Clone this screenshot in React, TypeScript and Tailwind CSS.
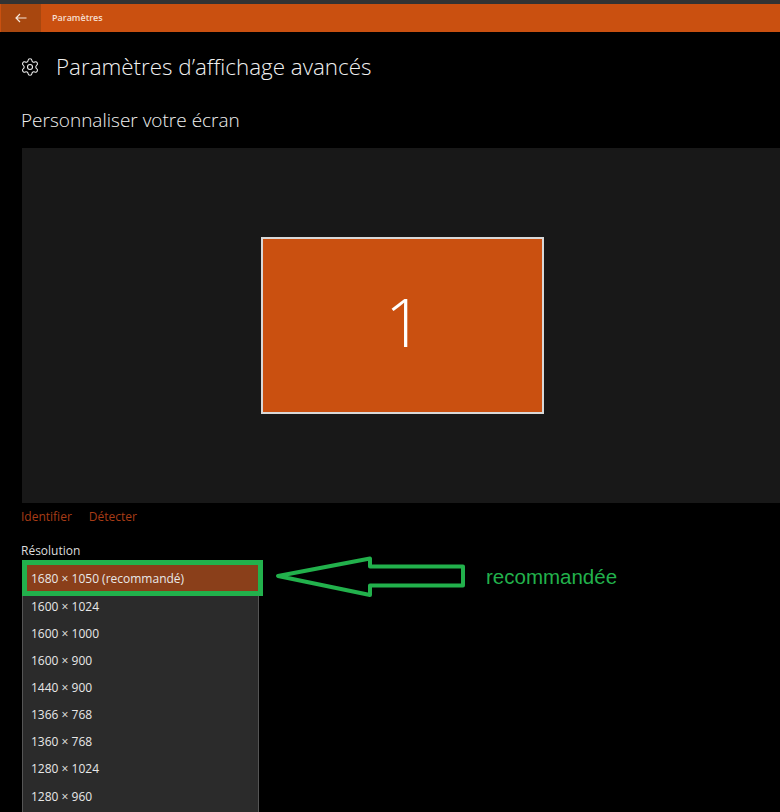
import { Settings } from "lucide-react";

const modes = ["1600 × 1024", "1600 × 1000", "1600 × 900", "1440 × 900", "1366 × 768", "1360 × 768", "1280 × 1024", "1280 × 960"];
const ui = "font-['Open_Sans',sans-serif]";

export default function App() {
  return (
    <div className={`relative h-[812px] w-[780px] overflow-hidden bg-black text-[#f0f0f0] ${ui}`}>
      <div className="h-1 bg-[#333333]" />
      <header className="flex h-7 items-center bg-[#ca5010] pl-px">
        <div className="flex h-full w-10 items-center justify-center bg-[#a8470f]">
          <svg width="12" height="10" viewBox="0 0 12 10" fill="none" stroke="#f5e6da" strokeWidth="1.2">
            <path d="M11.5 5H1M5 1 1 5l4 4" />
          </svg>
        </div>
        <span className="pl-[11px] text-[9px] font-semibold text-[#f6dfd0]">Paramètres</span>
      </header>

      <div className="flex h-[70px] items-center pl-[20px]">
        <Settings size={20} strokeWidth={1.3} className="text-[#eeeeee]" />
        <h1 className="pl-[16px] text-[22.4px] font-light">Paramètres d’affichage avancés</h1>
      </div>

      <h2 className="pl-[21px] text-[19px] font-light leading-[36px]">Personnaliser votre écran</h2>

      <div className="ml-[22px] mt-[10px] flex h-[355px] items-center justify-center bg-[#181818]">
        <div className="mb-[1px] ml-[3px] flex h-[177px] w-[283px] items-center justify-center border-2 border-[#d8d8d8] bg-[#ca5010] text-[66px] font-light text-white">
          <span className="-mt-[8px] ml-[3px]">1</span>
        </div>
      </div>

      <div className="flex gap-[17px] pl-[21px] pt-[5px] text-[12px] leading-[18px] text-[#a83c16]">
        <span>Identifier</span>
        <span>Détecter</span>
      </div>

      <div className="pl-[21px] pt-[17px] text-[12px] leading-[16px] text-[#dddddd]">Résolution</div>

      <div className="ml-[22px] mt-[2px] w-[237px] border border-[#555555] bg-[#2b2b2b] pb-[8px] text-[12px] text-[#e8e8e8]">
        <div className="flex h-[31px] items-center bg-[#8a3f1a] pl-[8px] pt-[3px]">1680 × 1050 (recommandé)</div>
        {modes.map((m) => (
          <div key={m} className="flex h-[27.15px] items-center pl-[8px]">{m}</div>
        ))}
      </div>

      <div className="absolute left-[22px] top-[560px] h-[36px] w-[241px] border-[5px] border-[#22b14c]" />

      <svg className="absolute left-[270px] top-[550px]" width="200" height="52" viewBox="270 550 200 52" fill="none" stroke="#22b14c" strokeWidth="4" strokeLinejoin="round">
        <path d="M278 576 370 558.5V566.5H463V585.5H370V595Z" />
      </svg>

      <div className="absolute left-[486px] top-[565px] font-['Liberation_Sans',sans-serif] text-[20.5px] leading-[24px] text-[#22b14c]">
        recommandée
      </div>
    </div>
  );
}
